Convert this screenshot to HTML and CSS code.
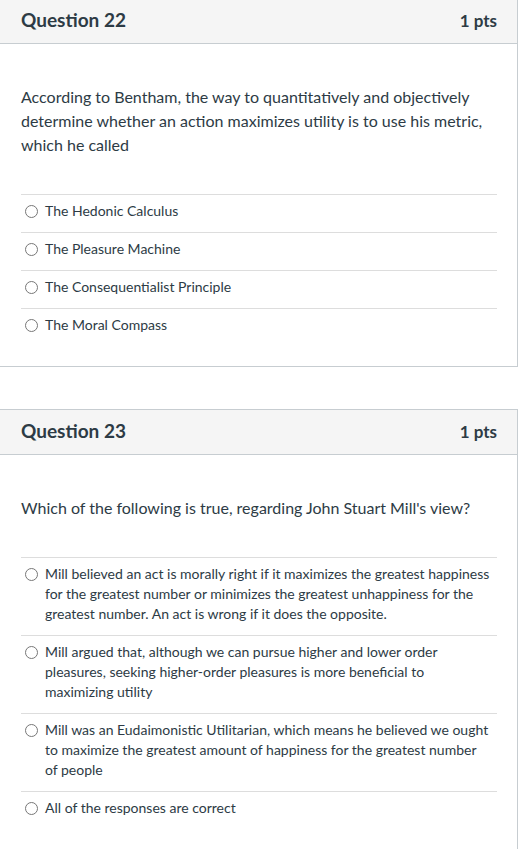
FILE: index.html
```html
<!DOCTYPE html>
<html>
<head>
<meta charset="utf-8">
<link rel="stylesheet" href="styles.css">
</head>
<body>
<div class="page">
  <section class="card first">
    <header class="card-header">
      <h2 class="title">Question 22</h2>
      <span class="pts">1 pts</span>
    </header>
    <div class="card-body">
      <p class="question">According to Bentham, the way to quantitatively and objectively determine whether an action maximizes utility is to use his metric, which he called</p>
      <ul class="answers">
        <li class="answer"><span class="radio"></span><span class="label">The Hedonic Calculus</span></li>
        <li class="answer"><span class="radio"></span><span class="label">The Pleasure Machine</span></li>
        <li class="answer"><span class="radio"></span><span class="label">The Consequentialist Principle</span></li>
        <li class="answer"><span class="radio"></span><span class="label">The Moral Compass</span></li>
      </ul>
    </div>
  </section>
  <section class="card">
    <header class="card-header">
      <h2 class="title">Question 23</h2>
      <span class="pts">1 pts</span>
    </header>
    <div class="card-body">
      <p class="question">Which of the following is true, regarding John Stuart Mill's view?</p>
      <ul class="answers">
        <li class="answer"><span class="radio"></span><span class="label">Mill believed an act is morally right if it maximizes the greatest happiness for the greatest number or minimizes the greatest unhappiness for the greatest number. An act is wrong if it does the opposite.</span></li>
        <li class="answer"><span class="radio"></span><span class="label">Mill argued that, although we can pursue higher and lower order pleasures, seeking higher-order pleasures is more beneficial to maximizing utility</span></li>
        <li class="answer"><span class="radio"></span><span class="label">Mill was an Eudaimonistic Utilitarian, which means he believed we ought to maximize the greatest amount of happiness for the greatest number of people</span></li>
        <li class="answer"><span class="radio"></span><span class="label">All of the responses are correct</span></li>
      </ul>
    </div>
  </section>
</div>
</body>
</html>
```
FILE: styles.css
```css
html, body {
  margin: 0;
  padding: 0;
  background: #ffffff;
}
body {
  font-family: Lato, "Open Sans", "Liberation Sans", sans-serif;
  color: #2d3b45;
  overflow: hidden;
}
.page {
  display: flex;
  flex-direction: column;
  gap: 42px;
  margin-left: -1px;
  width: 519px;
}
.card {
  border: 1px solid #c7cdd1;
  box-sizing: border-box;
  width: 519px;
}
.card.first {
  margin-top: -2px;
}
.card-header {
  display: flex;
  align-items: center;
  justify-content: space-between;
  height: 44px;
  padding: 0 20px 0 21px;
  background: #f5f5f5;
  border-bottom: 1px solid #c7cdd1;
}
.title {
  margin: 0 0 4px;
  font-size: 19px;
  font-weight: 700;
  color: #2d3b45;
}
.pts {
  margin-bottom: 1px;
  font-size: 17px;
  font-weight: 700;
  color: #2d3b45;
}
.card-body {
  padding: 41px 20px 20px 21px;
}
.question {
  margin: 0 0 37px;
  font-size: 16px;
  line-height: 24px;
  color: #2d3b45;
}
.answers {
  list-style: none;
  margin: 0;
  padding: 0;
}
.answer {
  display: flex;
  align-items: flex-start;
  border-top: 1px solid #dddddd;
  padding: 6px 0 11px;
  font-size: 14px;
  line-height: 20px;
}
.radio {
  flex: none;
  width: 13px;
  height: 13px;
  box-sizing: border-box;
  border: 1px solid #777777;
  border-radius: 50%;
  margin: 4px 7px 0 4px;
}
.label {
  flex: 1;
  padding-right: 6px;
}
```
